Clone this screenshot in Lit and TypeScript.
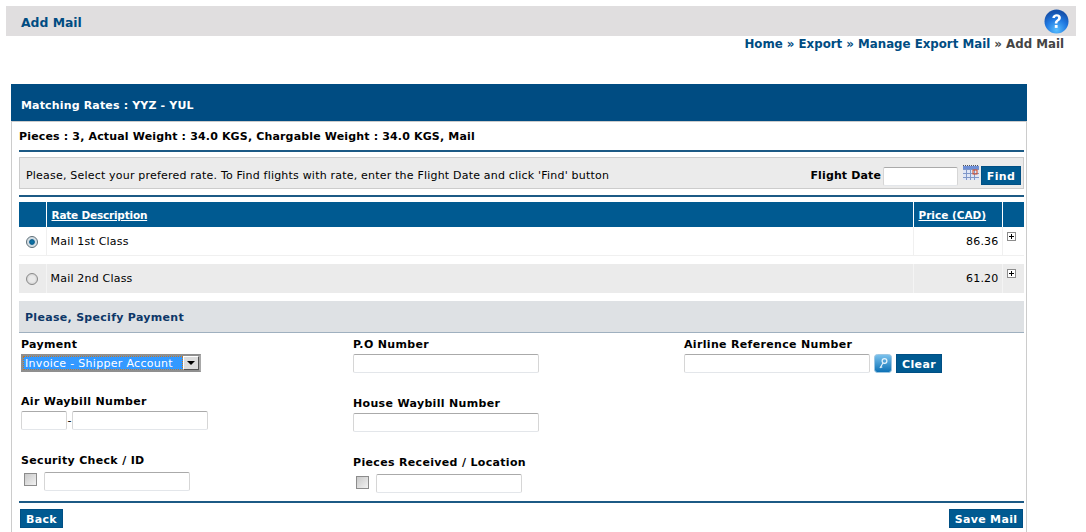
import { LitElement, html, css } from "lit";
import { customElement } from "lit/decorators.js";

@customElement("app-root")
export class AppRoot extends LitElement {
  static styles = css`
    :host { display: block; height: 532px; overflow: hidden; background: #fff; font-family: "DejaVu Sans", Verdana, sans-serif; font-size: 11px; color: #000; letter-spacing: 0.2px; }
    * { box-sizing: border-box; }
    .page { padding-top: 6px; }
    .title { margin: 0 10px 0 6px; height: 30px; background: #e0dedf; display: flex; align-items: center; justify-content: space-between; padding: 0 7px 0 15px; }
    .title h1 { margin: 0; padding-top: 2px; font-size: 12.4px; letter-spacing: 0; font-weight: bold; color: #004c82; }
    .help { display: block; }
    .crumb { height: 48px; padding: 1px 22px 0 0; text-align: right; font-size: 11.8px; letter-spacing: 0; font-weight: bold; color: #004c82; line-height: 14px; }
    .crumb .cur, .crumb .sep.last { color: #444; }
    .panel { margin-left: 11px; width: 1016px; }
    .panel-head { height: 37px; background: #004c82; color: #fff; font-weight: bold; font-size: 11px; letter-spacing: 0.16px; display: flex; align-items: center; padding: 5px 0 0 10px; }
    .panel-body { border: solid #ccc; border-width: 1px 1px 0; padding: 0 2px 0 7px; height: 420px; }
    .pieces { height: 28px; font-weight: bold; letter-spacing: 0.16px; display: flex; align-items: center; padding-top: 1px; }
    .rule { height: 2px; background: #1c5a85; }
    .notice { margin: 5px 0 6px; height: 32px; background: #ebebeb; border: 1px solid #ccc; display: flex; align-items: flex-start; padding: 0 2px 0 6px; }
    .notice .msg { flex: 1; margin-top: 11px; line-height: 14px; }
    .notice b { margin: 11px 2px 0 0; line-height: 14px; letter-spacing: 0.13px; }
    .notice .dt { width: 75px; margin-top: 9px; }
    .notice .cal { margin: 7px 2px 0 5px; }
    .btn { display: inline-flex; align-items: center; justify-content: center; height: 19px; padding-top: 1px; background: #005a91; border: 1px solid #004f84; color: #fff; font-weight: bold; font-size: 11px; letter-spacing: 0.33px; }
    .notice .btn { margin-top: 8px; width: 40px; }
    table { width: 100%; margin-top: 5px; border-collapse: collapse; table-layout: fixed; }
    th { height: 25px; background: #005a91; color: #fff; text-align: left; font-size: 10.5px; letter-spacing: 0; border-left: 1px solid #fff; padding: 1px 0 0 5px; }
    th:first-child { border-left: 0; }
    th .desc { letter-spacing: -0.2px; }
    td { padding: 0 0 0 4px; border-left: 1px solid #f0f0f0; vertical-align: top; }
    td:first-child { border-left: 0; }
    .r1 td { height: 28px; border-bottom: 1px solid #f0f0f0; padding-top: 8px; }
    .gap td { height: 9px; padding: 0; border: 0; }
    .r2 td { height: 29px; background: #ebebeb; padding-top: 8px; border-left-color: #f4f4f4; }
    td.num { text-align: right; padding-right: 3px; }
    td.radio { padding: 9px 0 0 7px; }
    td.plus { padding: 5px 0 0 4px; }
    .plusbox { display: block; }
    .rd { display: block; width: 12px; height: 12px; border-radius: 50%; border: 1px solid #8a8a8a; background: radial-gradient(circle at 50% 50%, #e9e9e9 0, #e9e9e9 40%, #c4c4c4 100%); }
    .rd.on { background: radial-gradient(circle at 50% 50%, #0b78ad 0, #0b5f8f 34%, #cfdbe2 46%, #e4e9ec 100%); border-color: #5f6f78; }
    .sect { margin-top: 8px; height: 32px; background: #dee1e4; border-bottom: 1px solid #9fb0bf; color: #0d3768; font-weight: bold; letter-spacing: 0.3px; padding: 2px 0 0 6px; display: flex; align-items: center; }
    .form { display: flex; height: 168px; padding-left: 2px; }
    .col { display: flex; flex-direction: column; padding-top: 4px; }
    .c1 { width: 332px; }
    .c2 { width: 331px; }
    label { display: block; font-weight: bold; letter-spacing: 0.33px; height: 15px; line-height: 15px; }
    .ctl { display: flex; align-items: flex-start; margin-top: 2px; margin-bottom: 23px; }
    .ctl.first { margin-bottom: 22px; }
    .ctl.tall { margin-top: 4px; margin-bottom: 0; }
    .inp { display: block; width: 186px; height: 19px; background: #fff; border: 1px solid #e3e6ea; border-top-color: #aaa; border-left-color: #d6d6d6; border-right-color: #d6d6d6; border-radius: 2px; }
    .w46 { width: 46px; } .w136 { width: 136px; } .w146 { width: 146px; }
    .dash { width: 5px; text-align: center; line-height: 19px; }
    .sel { display: flex; width: 180px; height: 18px; border: 2px solid #8f8f8f; border-right-color: #a8a8a8; background: #d4d0c8; }
    .sel .val { flex: 1; background: #3399ff; color: #fff; letter-spacing: 0.3px; outline: 1px dotted #c9771f; outline-offset: -1px; padding: 1px 0 0 2px; line-height: 14px; white-space: nowrap; overflow: hidden; }
    .sel .arr { width: 16px; background: #dcdcdc; border: 1px solid #fff; border-right-color: #555; border-bottom-color: #555; display: flex; align-items: center; justify-content: center; }
    .tri { width: 0; height: 0; border: 4px solid transparent; border-top-color: #000; border-bottom: 0; }
    .chk { display: block; width: 13px; height: 13px; border: 1px solid #8c8c8c; background: linear-gradient(135deg, #c9c9c9, #f2f2f2); margin: 1px 7px 0 3px; }
    .chk.low { margin-top: 2px; }
    .key { margin: 0 4px 0 4px; display: block; }
    .clear { width: 46px; }
    .actions { display: flex; justify-content: space-between; padding: 6px 1px 0 1px; }
    .back { width: 43px; }
    .save { width: 74px; }
  `;

  render() {
    return html`
      <div class="page">
        <div class="title">
          <h1>Add Mail</h1>
          <svg class="help" width="25" height="25" viewBox="0 0 25 25">
            <defs>
              <radialGradient id="hg" cx="50%" cy="85%" r="75%">
                <stop offset="0" stop-color="#58beff" /><stop offset="0.6" stop-color="#1f78e0" /><stop offset="1" stop-color="#1652ac" />
              </radialGradient>
            </defs>
            <circle cx="12.5" cy="12.5" r="12" fill="url(#hg)" />
            <path d="M8.3 9c.3-2.5 2.1-3.7 4.4-3.7 2.5 0 4.2 1.4 4.2 3.5 0 1.7-1 2.5-2.1 3.2-1 .6-1.4 1.1-1.4 2.5h-2.6c0-2.1.7-2.9 1.9-3.8.9-.6 1.4-1.1 1.4-1.9 0-.9-.6-1.3-1.5-1.3-1 0-1.6.6-1.7 1.6z" fill="#fff" />
            <rect x="10.8" y="16" width="2.8" height="2.9" fill="#fff" />
          </svg>
        </div>
        <div class="crumb">Home <span class="sep">»</span> Export <span class="sep">»</span> Manage Export Mail <span class="sep last">»</span> <span class="cur">Add Mail</span></div>
        <div class="panel">
          <div class="panel-head">Matching Rates : YYZ - YUL</div>
          <div class="panel-body">
            <div class="pieces">Pieces : 3, Actual Weight : 34.0 KGS, Chargable Weight : 34.0 KGS, Mail</div>
            <div class="rule"></div>
            <div class="notice">
              <span class="msg">Please, Select your prefered rate. To Find flights with rate, enter the Flight Date and click 'Find' button</span>
              <b>Flight Date</b>
              <span class="inp dt"></span>
              <svg class="cal" width="16" height="15" viewBox="0 0 16 15">
                <rect x="0" y="0" width="16" height="15" fill="#dfe6f5" />
                <path d="M0 .5h16" stroke="#555" stroke-dasharray="1 1" />
                <rect x="0" y="1" width="16" height="3" fill="#6e8fd6" />
                <path d="M0 4.5h16M0 8.5h16M0 12.5h16M3.5 4v11M7.5 4v11M11.5 4v11" stroke="#7f97c8" fill="none" />
                <rect x="10" y="5" width="4" height="4" fill="none" stroke="#d8461e" />
              </svg>
              <span class="btn">Find</span>
            </div>
            <div class="rule"></div>
            <table>
              <colgroup><col style="width:27px" /><col /><col style="width:89px" /><col style="width:22px" /></colgroup>
              <tr><th></th><th><u class="desc">Rate Description</u></th><th><u>Price (CAD)</u></th><th></th></tr>
              <tr class="r1">
                <td class="radio"><span class="rd on"></span></td><td>Mail 1st Class</td><td class="num">86.36</td>
                <td class="plus">${this.plus()}</td>
              </tr>
              <tr class="gap"><td colspan="4"></td></tr>
              <tr class="r2">
                <td class="radio"><span class="rd"></span></td><td>Mail 2nd Class</td><td class="num">61.20</td>
                <td class="plus">${this.plus()}</td>
              </tr>
            </table>
            <div class="sect">Please, Specify Payment</div>
            <div class="form">
              <div class="col c1">
                <label>Payment</label>
                <div class="ctl first"><div class="sel"><span class="val">Invoice - Shipper Account</span><span class="arr"><i class="tri"></i></span></div></div>
                <label>Air Waybill Number</label>
                <div class="ctl"><span class="inp w46"></span><span class="dash">-</span><span class="inp w136"></span></div>
                <label>Security Check / ID</label>
                <div class="ctl tall"><span class="chk"></span><span class="inp w146"></span></div>
              </div>
              <div class="col c2">
                <label>P.O Number</label>
                <div class="ctl"><span class="inp"></span></div>
                <label>House Waybill Number</label>
                <div class="ctl"><span class="inp"></span></div>
                <label>Pieces Received / Location</label>
                <div class="ctl tall"><span class="chk low"></span><span class="inp w146"></span></div>
              </div>
              <div class="col">
                <label>Airline Reference Number</label>
                <div class="ctl">
                  <span class="inp"></span>
                  <svg class="key" width="18" height="19" viewBox="0 0 18 19">
                    <defs><linearGradient id="kg" x1="0" y1="0" x2="0" y2="1"><stop offset="0" stop-color="#7cc3ee" /><stop offset="1" stop-color="#0a6fb4" /></linearGradient></defs>
                    <rect x="0.5" y="0.5" width="17" height="18" rx="3" fill="url(#kg)" stroke="#9cc6e2" />
                    <circle cx="10.5" cy="7" r="2.4" fill="none" stroke="#e6f3fb" stroke-width="1.2" />
                    <path d="M9 9 6 14M6.8 12.6l1.4.9" stroke="#e6f3fb" stroke-width="1.2" fill="none" />
                  </svg>
                  <span class="btn clear">Clear</span>
                </div>
              </div>
            </div>
            <div class="rule"></div>
            <div class="actions"><span class="btn back">Back</span><span class="btn save">Save Mail</span></div>
          </div>
        </div>
      </div>
    `;
  }

  plus() {
    return html`<svg class="plusbox" width="9" height="9" viewBox="0 0 9 9">
      <rect x="0.5" y="0.5" width="8" height="8" fill="#fff" stroke="#8c8c8c" />
      <path d="M2 4.5h5M4.5 2v5" stroke="#000" />
    </svg>`;
  }
}
